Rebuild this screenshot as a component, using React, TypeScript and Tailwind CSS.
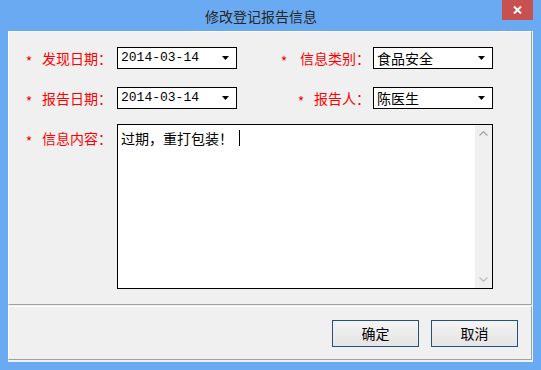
const cjk = "font-['Noto_Sans_CJK_SC','Noto_Sans',sans-serif]";

function Triangle() {
  return (
    <svg width="7" height="4" viewBox="0 0 7 4" className="shrink-0">
      <path d="M0 0H7L3.5 4Z" fill="#000" />
    </svg>
  );
}

function Label({ text, gap, width }: { text: string; gap: number; width: string }) {
  return (
    <div className={`flex h-[22px] shrink-0 items-center justify-end text-[14px] leading-[20px] text-[#ff0000] ${width}`}>
      <span className="relative top-[3px] w-[10px] text-center" style={{ marginRight: gap }}>
        *
      </span>
      <span>{text}</span>
    </div>
  );
}

function Combo({ value, mono }: { value: string; mono?: boolean }) {
  return (
    <div className="flex h-[22px] w-[120px] shrink-0 items-center justify-between border border-black bg-white pl-[3px] pr-[7px]">
      <span
        className={
          mono
            ? "font-['Liberation_Mono','Noto_Sans_CJK_SC',monospace] text-[13px] leading-[18px] text-black"
            : "text-[14px] leading-[18px] text-black"
        }
      >
        {value}
      </span>
      <Triangle />
    </div>
  );
}

function Button({ children }: { children: React.ReactNode }) {
  return (
    <button className="flex h-[27px] w-[87px] items-center justify-center border border-[#24527e] bg-gradient-to-b from-[#f4f4f4] to-[#e4e4e4] text-[14px] text-black">
      {children}
    </button>
  );
}

export default function App() {
  return (
    <div className={`flex h-[370px] w-[541px] flex-col bg-[#6aaaf2] px-[8px] pb-[8px] ${cjk}`}>
      <div className="relative flex h-[31px] shrink-0 items-center justify-center pr-[19px]">
        <span className="text-[14px] leading-[20px] text-[#262626]">修改登记报告信息</span>
        <div className="absolute right-0 top-0 flex h-[20px] w-[31px] items-center justify-center bg-[#c75050]">
          <svg width="9" height="8" viewBox="0 0 9 8">
            <path d="M1 0.5L8 7.5M8 0.5L1 7.5" stroke="#fff" strokeWidth="2" />
          </svg>
        </div>
      </div>

      <div className="flex flex-1 flex-col bg-[#f0f0f0] pb-[2px] pr-[1px]">
        <div className="h-[274px] shrink-0 border border-b-[#a0a0a0] border-l-white border-r-[#a0a0a0] border-t-white pt-[15px]">
          <div className="flex">
            <Label text="发现日期：" gap={8} width="w-[108px] pr-[5px]" />
            <Combo value="2014-03-14" mono />
            <Label text="信息类别：" gap={11} width="w-[136px] pr-[3px]" />
            <Combo value="食品安全" />
          </div>
          <div className="mt-[18px] flex">
            <Label text="报告日期：" gap={8} width="w-[108px] pr-[5px]" />
            <Combo value="2014-03-14" mono />
            <Label text="报告人：" gap={8} width="w-[136px] pr-[3px]" />
            <Combo value="陈医生" />
          </div>
          <div className="mt-[15px] flex items-start">
            <div className="w-[108px] pt-[3px]">
              <Label text="信息内容：" gap={8} width="w-[108px] pr-[5px]" />
            </div>
            <div className="flex h-[165px] w-[376px] border border-black bg-white">
              <div className="flex flex-1 items-start pl-[3px] pt-[3px]">
                <span className="text-[14px] leading-[20px] text-black">过期，重打包装！</span>
                <span className="ml-[6px] mt-[2px] h-[16px] w-[1px] bg-black" />
              </div>
              <div className="flex w-[17px] flex-col items-center justify-between bg-[#f0f0f0] py-[6px]">
                <svg width="9" height="5" viewBox="0 0 9 5">
                  <path d="M0.5 4.5L4.5 0.8L8.5 4.5" fill="none" stroke="#a8a8a8" strokeWidth="1.4" />
                </svg>
                <svg width="9" height="5" viewBox="0 0 9 5">
                  <path d="M0.5 0.5L4.5 4.2L8.5 0.5" fill="none" stroke="#c0c0c0" strokeWidth="1.4" />
                </svg>
              </div>
            </div>
          </div>
        </div>

        <div className="mt-[1px] flex h-[54px] shrink-0 items-center justify-end gap-[12px] border border-b-[#a0a0a0] border-l-white border-r-[#a0a0a0] border-t-white pr-[13px]">
          <Button>确定</Button>
          <Button>取消</Button>
        </div>
      </div>
    </div>
  );
}
